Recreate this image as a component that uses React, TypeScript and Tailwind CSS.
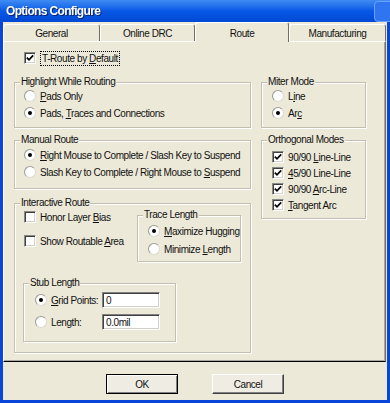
import React from "react";

const BG = "bg-[#ece9d8]";

function U({ children }: { children: React.ReactNode }) {
  return <span className="underline decoration-1 underline-offset-[1px]">{children}</span>;
}

function Check({ checked }: { checked?: boolean }) {
  return (
    <span className="w-[12px] h-[12px] shrink-0 bg-white border border-t-[#8a8a84] border-l-[#8a8a84] border-b-white border-r-white shadow-[inset_1px_1px_0_#404040,inset_-1px_-1px_0_#d4d0c8] flex items-center justify-center">
      {checked && (
        <svg width="8" height="8" viewBox="0 0 8 8">
          <path d="M0.8 3.6 L3 5.8 L7.2 1.4" stroke="#000" strokeWidth="1.7" fill="none" />
        </svg>
      )}
    </span>
  );
}

function Radio({ checked }: { checked?: boolean }) {
  return (
    <span className="w-[12px] h-[12px] shrink-0 rounded-full bg-white border border-t-[#9a9a94] border-l-[#9a9a94] border-b-[#dcdad0] border-r-[#dcdad0] flex items-center justify-center">
      {checked && <span className="w-[4px] h-[4px] rounded-full bg-black" />}
    </span>
  );
}

function Row({ children, className = "" }: { children: React.ReactNode; className?: string }) {
  return <div className={`h-[14px] flex items-center gap-[4px] whitespace-nowrap ${className}`}>{children}</div>;
}

function Group({
  label,
  className = "",
  children,
}: {
  label: string;
  className?: string;
  children?: React.ReactNode;
}) {
  return (
    <div className={`relative shrink-0 border border-[#c2bfb1] shadow-[inset_1px_1px_0_#fff,1px_1px_0_#fff] ${className}`}>
      <span className={`absolute -top-[7px] left-[5px] px-[1px] ${BG} leading-[12px] whitespace-nowrap`}>{label}</span>
      {children}
    </div>
  );
}

function Tab({ label, w, selected }: { label: string; w: string; selected?: boolean }) {
  return (
    <div
      className={`${w} ${
        selected ? "h-[20px] -mb-[1px] relative z-10 pt-[1px]" : "h-[17px]"
      } ${BG} border-t border-l border-white border-r border-r-[#716f64] rounded-t-[3px] flex items-center justify-center`}
    >
      {label}
    </div>
  );
}

function Input({ value }: { value: string }) {
  return (
    <div className="w-[58px] h-[16px] bg-white border border-t-[#808080] border-l-[#808080] border-b-white border-r-white shadow-[inset_1px_1px_0_#404040,inset_-1px_-1px_0_#d4d0c8] flex items-center pl-[3px]">
      {value}
    </div>
  );
}

export default function App() {
  return (
    <div className="w-[390px] h-[403px] overflow-hidden bg-[#0845d8] flex flex-col font-['Liberation_Sans',Arial,sans-serif] text-[10px] tracking-[-0.42px] text-[#111]">
      {/* Title bar */}
      <div className="h-[22px] shrink-0 bg-linear-to-b from-[#3f8cf3] via-[#0758e6] to-[#0348d4] flex items-center justify-between pl-[6px]">
        <span className="text-white font-bold text-[12px] tracking-[-0.65px] leading-none drop-shadow-[1px_1px_0_#0a246a]">
          Options Configure
        </span>
        <div className="w-[22px] h-[21px] -mr-[6px] rounded-[4px] bg-[#2f74f0] border border-[#6aa0ff]" />
      </div>

      {/* Body */}
      <div className={`flex-1 ml-[3px] mr-[3px] mb-[3px] ${BG} flex flex-col`}>
        {/* Tabs */}
        <div className="h-[19px] flex items-end shrink-0">
          <Tab label="General" w="w-[97px]" />
          <Tab label="Online DRC" w="w-[95px]" />
          <Tab label="Route" w="w-[94px]" selected />
          <Tab label="Manufacturing" w="w-[97px]" />
        </div>

        {/* Panel */}
        <div
          className={`h-[321px] w-[383px] shrink-0 ${BG} border-t border-l border-white border-r border-r-[#716f64] border-b border-b-black shadow-[inset_-1px_-1px_0_#aca899] pt-[9px] pl-[10px] flex flex-col`}
        >
          <Row className="ml-[10px]">
            <Check checked />
            <span className="border border-dotted border-black px-[1px] leading-[13px]">
              T-Route by <U>D</U>efault
            </span>
          </Row>

          <div className="mt-[17px] flex">
            {/* Left column */}
            <div className="w-[237px] flex flex-col">
              <Group label="Highlight While Routing" className="h-[46px] pl-[9px] pt-[6px] flex flex-col gap-[3px]">
                <Row>
                  <Radio />
                  <span>
                    <U>P</U>ads Only
                  </span>
                </Row>
                <Row>
                  <Radio checked />
                  <span>
                    Pads, <U>T</U>races and Connections
                  </span>
                </Row>
              </Group>

              <Group label="Manual Route" className="mt-[12px] h-[49px] pl-[9px] pt-[7px] flex flex-col gap-[3px]">
                <Row>
                  <Radio checked />
                  <span>
                    <U>R</U>ight Mouse to Complete / Slash Key to Suspend
                  </span>
                </Row>
                <Row>
                  <Radio />
                  <span>
                    Slash Key to Complete / Right Mouse to <U>S</U>uspend
                  </span>
                </Row>
              </Group>

              <Group label="Interactive Route" className="mt-[14px] h-[150px] pl-[8px] flex flex-col">
                <div className="flex items-start">
                  <div className="w-[114px] pt-[6px] pl-[1px] flex flex-col">
                    <Row>
                      <Check />
                      <span>
                        Honor Layer <U>B</U>ias
                      </span>
                    </Row>
                    <Row className="mt-[10px]">
                      <Check />
                      <span>
                        Show Routable <U>A</U>rea
                      </span>
                    </Row>
                  </div>
                  <Group label="Trace Length" className="mt-[11px] w-[104px] h-[47px] pl-[10px] pt-[8px] flex flex-col gap-[4px]">
                    <Row>
                      <Radio checked />
                      <span>
                        <U>M</U>aximize Hugging
                      </span>
                    </Row>
                    <Row>
                      <Radio />
                      <span>
                        Minimize <U>L</U>ength
                      </span>
                    </Row>
                  </Group>
                </div>

                <Group label="Stub Length" className="mt-[21px] w-[153px] h-[59px] pl-[11px] pt-[8px] flex flex-col gap-[6px]">
                  <div className="h-[16px] flex items-center">
                    <Radio checked />
                    <span className="ml-[4px] w-[51px]">
                      <U>G</U>rid Points:
                    </span>
                    <Input value="0" />
                  </div>
                  <div className="h-[16px] flex items-center">
                    <Radio />
                    <span className="ml-[4px] w-[51px]">Length:</span>
                    <Input value="0.0mil" />
                  </div>
                </Group>
              </Group>
            </div>

            {/* Right column */}
            <div className="ml-[10px] w-[105px] flex flex-col">
              <Group label="Miter Mode" className="h-[46px] pl-[10px] pt-[6px] flex flex-col gap-[3px]">
                <Row>
                  <Radio />
                  <span>
                    L<U>i</U>ne
                  </span>
                </Row>
                <Row>
                  <Radio checked />
                  <span>
                    Ar<U>c</U>
                  </span>
                </Row>
              </Group>

              <Group label="Orthogonal Modes" className="mt-[12px] h-[79px] pl-[10px] pt-[9px] flex flex-col gap-[2px]">
                <Row className="gap-[3px]">
                  <Check checked />
                  <span>
                    90/90 <U>L</U>ine-Line
                  </span>
                </Row>
                <Row className="gap-[3px]">
                  <Check checked />
                  <span>
                    <U>4</U>5/90 Line-Line
                  </span>
                </Row>
                <Row className="gap-[3px]">
                  <Check checked />
                  <span>
                    90/90 <U>A</U>rc-Line
                  </span>
                </Row>
                <Row className="gap-[3px]">
                  <Check checked />
                  <span>
                    <U>T</U>angent Arc
                  </span>
                </Row>
              </Group>
            </div>
          </div>
        </div>

        {/* Buttons */}
        <div className="flex-1 pt-[12px] flex justify-center gap-[34px]">
          <button className="w-[72px] h-[20px] bg-[#efede3] border border-black shadow-[inset_1px_1px_0_#fff,inset_-1px_-1px_0_#808080] flex items-center justify-center">
            OK
          </button>
          <button className="w-[72px] h-[20px] bg-[#efede3] border border-t-white border-l-white border-r-[#404040] border-b-[#404040] shadow-[inset_-1px_-1px_0_#808080] flex items-center justify-center">
            Cancel
          </button>
        </div>
      </div>
    </div>
  );
}
